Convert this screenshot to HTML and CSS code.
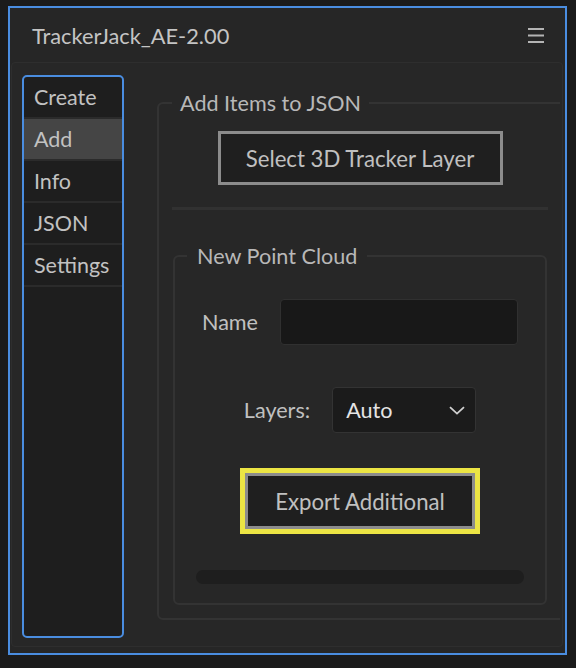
FILE: index.html
```html
<!DOCTYPE html>
<html>
<head>
<meta charset="utf-8">
<link rel="stylesheet" href="styles.css">
</head>
<body>
<div class="window">
  <div class="header">
    <span class="title">TrackerJack_AE-2.00</span>
    <svg class="menu" width="16" height="16" viewBox="0 0 16 16">
      <rect x="0" y="1" width="16" height="2" fill="#b4b4b4"/>
      <rect x="0" y="7.5" width="16" height="2" fill="#b4b4b4"/>
      <rect x="0" y="14" width="16" height="2" fill="#b4b4b4"/>
    </svg>
  </div>
  <div class="panel">
    <nav class="sidebar">
      <div class="tab">Create</div>
      <div class="tab active">Add</div>
      <div class="tab">Info</div>
      <div class="tab">JSON</div>
      <div class="tab">Settings</div>
    </nav>
    <main class="main">
      <fieldset class="outer">
        <legend>Add Items to JSON</legend>
        <button class="btn select-btn">Select 3D Tracker Layer</button>
        <div class="sep"></div>
        <fieldset class="inner">
          <legend>New Point Cloud</legend>
          <div class="row name-row">
            <span class="label">Name</span>
            <div class="input"></div>
          </div>
          <div class="row layers-row">
            <span class="label">Layers:</span>
            <div class="select">
              <span class="select-value">Auto</span>
              <svg width="16" height="9" viewBox="0 0 16 9"><path d="M1 1.2 L8 7.6 L15 1.2" fill="none" stroke="#d0d0d0" stroke-width="1.8"/></svg>
            </div>
          </div>
          <button class="btn export-btn">Export Additional</button>
          <div class="progress"></div>
        </fieldset>
      </fieldset>
    </main>
  </div>
</div>
</body>
</html>
```
FILE: styles.css
```css
html, body {
  margin: 0;
  padding: 0;
  background: #1b1b1b;
}
body {
  font-family: Lato, "Open Sans", sans-serif;
  color: #c2c2c2;
  width: 576px;
  height: 668px;
  overflow: hidden;
}
.window {
  box-sizing: border-box;
  margin: 6px 0 0 8px;
  width: 559px;
  height: 649px;
  border: 2px solid #4a8de0;
  background: #262626;
  display: flex;
  flex-direction: column;
}
.header {
  height: 54px;
  flex: none;
  display: flex;
  align-items: center;
  justify-content: space-between;
  padding: 0 21px 0 22px;
}
.title {
  font-size: 21.8px;
  color: #c4c4c4;
}
.menu {
  display: block;
}
.panel {
  flex: 1;
  margin: 0 2px 6px 1px;
  border: 1px solid #2e2e2e;
  border-radius: 4px;
  background: #272727;
  display: flex;
  min-height: 0;
}
.sidebar {
  width: 98px;
  margin: 12px 0 8px 10px;
  border: 2px solid #4a8de0;
  border-radius: 5px;
  background: #1e1e1e;
  flex: none;
  overflow: hidden;
}
.tab {
  height: 40px;
  line-height: 40px;
  padding-left: 10px;
  font-size: 21.5px;
  color: #c2c2c2;
  border-bottom: 2px solid #2b2b2b;
}
.tab.active {
  background: #454545;
}
.main {
  flex: 1;
  min-width: 0;
  overflow: hidden;
  padding: 28px 0 0 33px;
  margin-right: 2px;
}
fieldset {
  margin: 0;
  border: 2px solid #333333;
  border-radius: 6px;
  min-width: 0;
}
legend {
  font-size: 21.6px;
  line-height: 24px;
  color: #b8b8b8;
  padding: 0 8px;
}
.outer {
  margin-right: -5px;
  padding: 0 15px 13px 13px;
  display: flex;
  flex-direction: column;
  align-items: center;
}
.inner {
  padding: 0 12px 19px 12px;
  margin: 34px 1px 0 1px;
  align-self: stretch;
  display: flex;
  flex-direction: column;
  align-items: center;
}
.inner legend {
  padding: 0 10px;
}
.btn {
  font-family: Lato, "Open Sans", sans-serif;
  font-size: 22.2px;
  color: #c0c0c0;
  background: #1f1f1f;
  border: 3px solid #8c8c8c;
  padding: 0;
  margin: 0;
}
.select-btn {
  margin-top: 16px;
  width: 285px;
  height: 54px;
}
.sep {
  align-self: stretch;
  height: 3px;
  background: #313131;
  margin-top: 22px;
}
.row {
  display: flex;
  align-items: center;
  gap: 22px;
}
.label {
  font-size: 21.6px;
  color: #c0c0c0;
}
.name-row {
  margin-top: 31px;
}
.input {
  width: 238px;
  height: 46px;
  box-sizing: border-box;
  border: 1px solid #303030;
  border-radius: 4px;
  background: #181818;
}
.layers-row {
  margin-top: 42px;
}
.select {
  width: 144px;
  height: 46px;
  box-sizing: border-box;
  border: 1px solid #333333;
  border-radius: 4px;
  background: #1b1b1b;
  display: flex;
  align-items: center;
  justify-content: space-between;
  padding: 0 10px 0 13px;
}
.select-value {
  font-size: 21.6px;
  color: #e4e4e4;
}
.select svg {
  display: block;
}
.export-btn {
  margin-top: 40px;
  width: 230px;
  height: 56px;
  outline: 5px solid #ece544;
}
.progress {
  margin-top: 41px;
  width: 328px;
  height: 14px;
  border-radius: 7px;
  background: #1e1e1e;
}
```
